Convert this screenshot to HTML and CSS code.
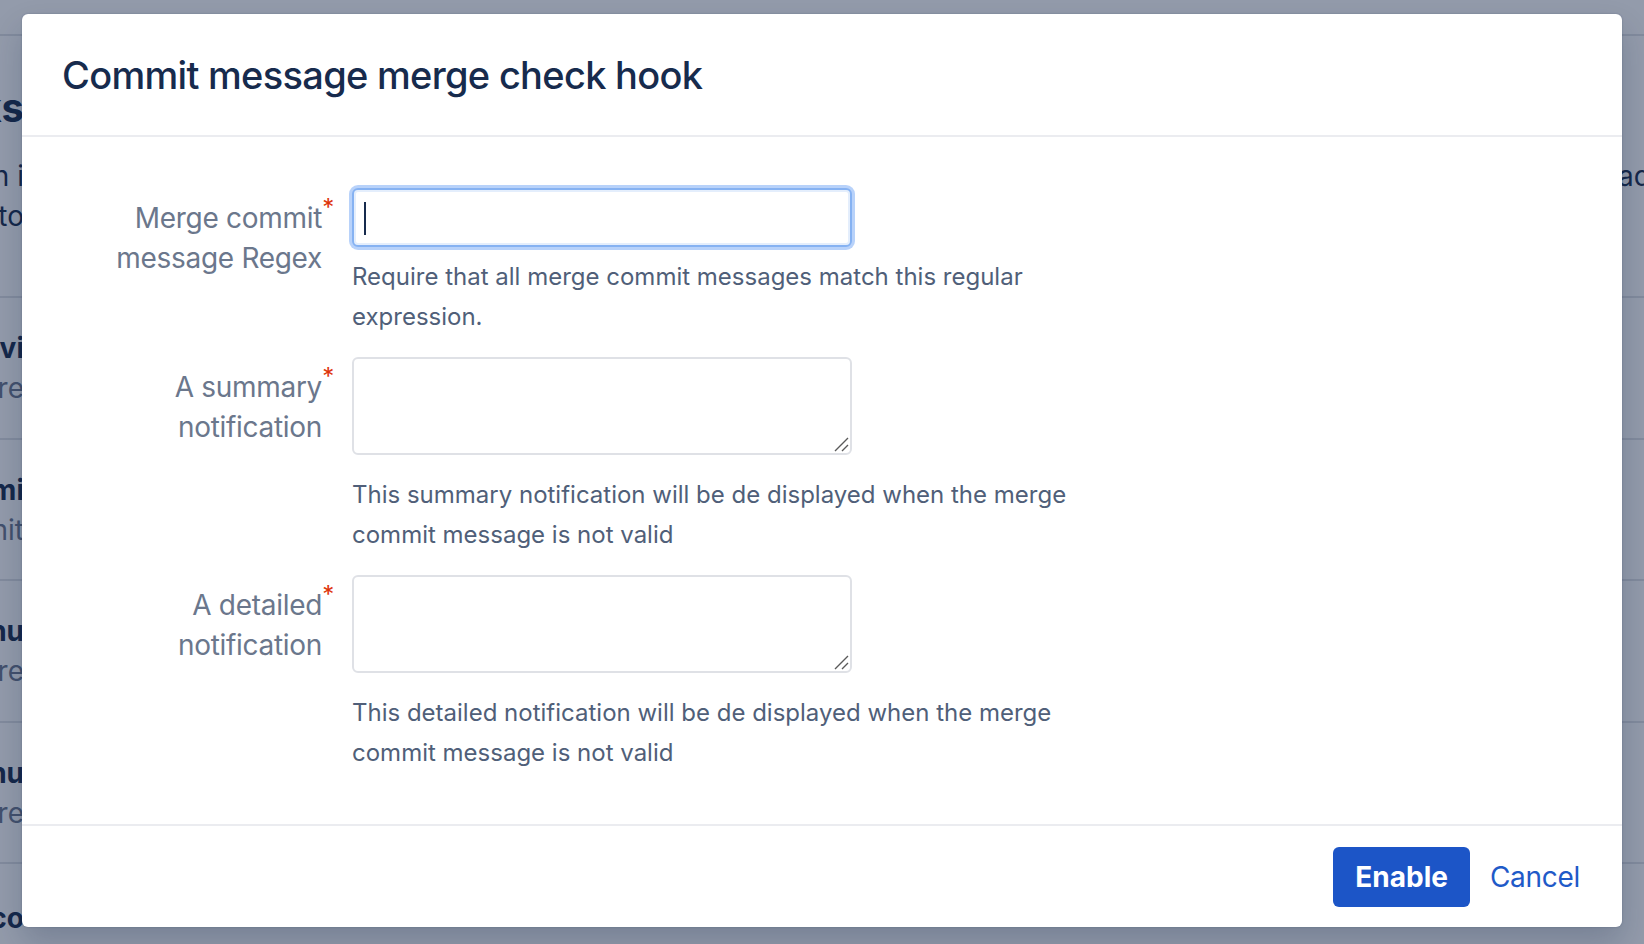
FILE: index.html
```html
<!DOCTYPE html>
<html lang="en">
<head>
<meta charset="utf-8">
<title>Commit message merge check hook</title>
<link rel="stylesheet" href="styles.css">
</head>
<body>
  <div class="page">
    <div class="page-nav"></div>
    <section class="page-intro">
      <div class="strips">
        <div class="strip-left">
          <h1 class="bg-heading">Hooks</h1>
          <p class="bg-text dark">Hooks run in i</p>
          <p class="bg-text dark">repository to</p>
        </div>
        <div class="strip-right">
          <p class="bg-text dark">ad</p>
        </div>
      </div>
    </section>
    <div class="bg-row"><div class="strip-left"><p class="bg-name">Reject Force Push by provi</p><p class="bg-text">Requires that all commits ire</p></div></div>
    <div class="bg-row"><div class="strip-left"><p class="bg-name">Verify Commi</p><p class="bg-text">Checks commit</p></div></div>
    <div class="bg-row"><div class="strip-left"><p class="bg-name">Minimum nu</p><p class="bg-text">Requires that ire</p></div></div>
    <div class="bg-row"><div class="strip-left"><p class="bg-name">Maximum nu</p><p class="bg-text">Requires that ire</p></div></div>
    <div class="bg-row last"><div class="strip-left"><p class="bg-name">Commit message co</p></div></div>
  </div>

  <div class="blanket"></div>

  <section class="dialog" role="dialog" aria-labelledby="dlg-title">
    <header class="dialog-header">
      <h2 id="dlg-title">Commit message merge check hook</h2>
    </header>
    <div class="dialog-content">
      <form class="hook-form">
        <div class="field-group">
          <label class="field-label" for="regex">Merge commit message Regex<span class="req">*</span></label>
          <div class="field">
            <div class="input-wrap">
              <input id="regex" class="text-input focused" type="text">
              <span class="caret"></span>
            </div>
            <div class="description">Require that all merge commit messages match this regular expression.</div>
          </div>
        </div>
        <div class="field-group">
          <label class="field-label" for="summary">A summary notification<span class="req">*</span></label>
          <div class="field">
            <div class="textarea-wrap">
              <textarea id="summary" class="textarea"></textarea>
              <svg class="resizer" width="16" height="16" viewBox="0 0 16 16" aria-hidden="true"><path d="M2 15 L15 2 M9 15 L15 9" stroke="#5a5a5a" stroke-width="1.4" fill="none"/></svg>
            </div>
            <div class="description">This summary notification will be de displayed when the merge commit message is not valid</div>
          </div>
        </div>
        <div class="field-group">
          <label class="field-label" for="detailed">A detailed notification<span class="req">*</span></label>
          <div class="field">
            <div class="textarea-wrap">
              <textarea id="detailed" class="textarea"></textarea>
              <svg class="resizer" width="16" height="16" viewBox="0 0 16 16" aria-hidden="true"><path d="M2 15 L15 2 M9 15 L15 9" stroke="#5a5a5a" stroke-width="1.4" fill="none"/></svg>
            </div>
            <div class="description">This detailed notification will be de displayed when the merge commit message is not valid</div>
          </div>
        </div>
      </form>
    </div>
    <footer class="dialog-footer">
      <button class="btn btn-primary" type="button">Enable</button>
      <button class="btn btn-link" type="button">Cancel</button>
    </footer>
  </section>
</body>
</html>
```

FILE: styles.css
```css
* { box-sizing: border-box; }

html, body {
  margin: 0;
  padding: 0;
  width: 1644px;
  height: 944px;
  overflow: hidden;
}

body {
  background: #ffffff;
  font-family: "Inter", "Noto Sans", "Liberation Sans", sans-serif;
  color: #172b4d;
  position: relative;
}

/* ---------- background page ---------- */
.page {
  display: flex;
  flex-direction: column;
  height: 944px;
  overflow: hidden;
}

.page-nav {
  height: 36px;
  flex-shrink: 0;
  border-bottom: 2px solid #dfe1e6;
}

.page-intro {
  height: 262px;
  flex-shrink: 0;
  border-bottom: 2px solid #dfe1e6;
  padding-top: 44px;
}

.strips {
  display: flex;
  justify-content: space-between;
}

.strip-left {
  width: 24px;
  overflow: hidden;
  display: flex;
  flex-direction: column;
  align-items: flex-end;
}

.strip-right {
  width: 26px;
  overflow: hidden;
  display: flex;
  flex-direction: column;
  align-items: flex-start;
  padding-top: 76px;
}

.strip-left > *, .strip-right > * {
  flex-shrink: 0;
  white-space: nowrap;
  margin: 0;
}

.bg-heading {
  font-size: 40px;
  line-height: 56px;
  font-weight: 700;
  color: #172b4d;
  margin: 0 0 20px 0;
}

.bg-text {
  font-size: 28px;
  line-height: 40px;
  color: #6b778c;
}

.bg-text.dark { color: #172b4d; }

.bg-name {
  font-size: 28px;
  line-height: 40px;
  font-weight: 700;
  color: #172b4d;
}

.bg-row {
  height: 141.5px;
  flex-shrink: 0;
  border-bottom: 2px solid #dfe1e6;
  padding-top: 30px;
}

.bg-row.last {
  height: 78px;
  border-bottom: none;
  padding-top: 34px;
}

.blanket {
  position: absolute;
  inset: 0;
  background: rgba(20, 38, 72, 0.46);
}

/* ---------- dialog ---------- */
.dialog {
  position: absolute;
  left: 22px;
  top: 14px;
  width: 1600px;
  height: 913px;
  background: #ffffff;
  border-radius: 6px;
  display: flex;
  flex-direction: column;
  box-shadow: 0 0 2px rgba(9, 30, 66, 0.25), 0 16px 32px rgba(9, 30, 66, 0.2);
}

.dialog-header {
  height: 123px;
  border-bottom: 2px solid #ebecf0;
  padding: 0 40px;
  display: flex;
  align-items: center;
}

.dialog-header h2 {
  margin: 0;
  font-size: 38px;
  line-height: 48px;
  font-weight: 500;
  color: #172b4d;
  letter-spacing: -0.7px;
}

.dialog-content {
  flex: 1;
  padding: 41px 40px 0 40px;
}

.hook-form {
  display: flex;
  flex-direction: column;
}

.field-group {
  display: grid;
  grid-template-columns: 260px 500px;
  column-gap: 30px;
  padding: 10px 0;
}

.field-label {
  position: relative;
  padding-top: 10px;
  text-align: right;
  font-size: 28px;
  line-height: 40px;
  letter-spacing: -0.3px;
  color: #6b778c;
}

.req {
  position: absolute;
  right: -12px;
  top: 8px;
  font-size: 24px;
  line-height: 24px;
  color: #de350b;
}

.field {
  display: flex;
  flex-direction: column;
}

.input-wrap {
  position: relative;
  height: 59px;
}

.text-input {
  display: block;
  width: 500px;
  height: 59px;
  margin: 0;
  padding: 0 12px;
  font: inherit;
  font-size: 28px;
  color: #172b4d;
  background: #ffffff;
  border: 2px solid #dfe1e6;
  border-radius: 6px;
  outline: none;
}

.text-input.focused {
  border-color: #86b2f2;
  box-shadow: 0 0 0 3px rgba(136, 180, 247, 0.6), inset 0 0 0 2px #e4eefc;
}

.caret {
  position: absolute;
  left: 12px;
  top: 14px;
  width: 2px;
  height: 33px;
  background: #172b4d;
}

.textarea-wrap {
  position: relative;
  width: 500px;
  margin-bottom: 10px;
}

.textarea {
  display: block;
  width: 500px;
  height: 98px;
  margin: 0;
  padding: 8px 12px;
  font: inherit;
  font-size: 28px;
  border: 2px solid #dfe1e6;
  border-radius: 6px;
  background: #ffffff;
  resize: none;
}

.resizer {
  position: absolute;
  right: 3px;
  bottom: 3px;
  pointer-events: none;
}

.description {
  margin-top: 10px;
  width: 760px;
  font-size: 24px;
  line-height: 40px;
  color: #505f79;
}

/* ---------- footer ---------- */
.dialog-footer {
  border-top: 2px solid #ebecf0;
  padding: 21px 20px 20px 40px;
  display: flex;
  justify-content: flex-end;
  align-items: center;
}

.btn {
  height: 60px;
  font-family: inherit;
  font-size: 28px;
  border: none;
  border-radius: 6px;
  cursor: pointer;
  margin: 0;
}

.btn-primary {
  background: #1c55c7;
  color: #ffffff;
  font-weight: 700;
  padding: 0 22px;
}

.btn-link {
  background: transparent;
  color: #1f5ac8;
  letter-spacing: -0.3px;
  padding: 0 22px 0 20px;
}
```
